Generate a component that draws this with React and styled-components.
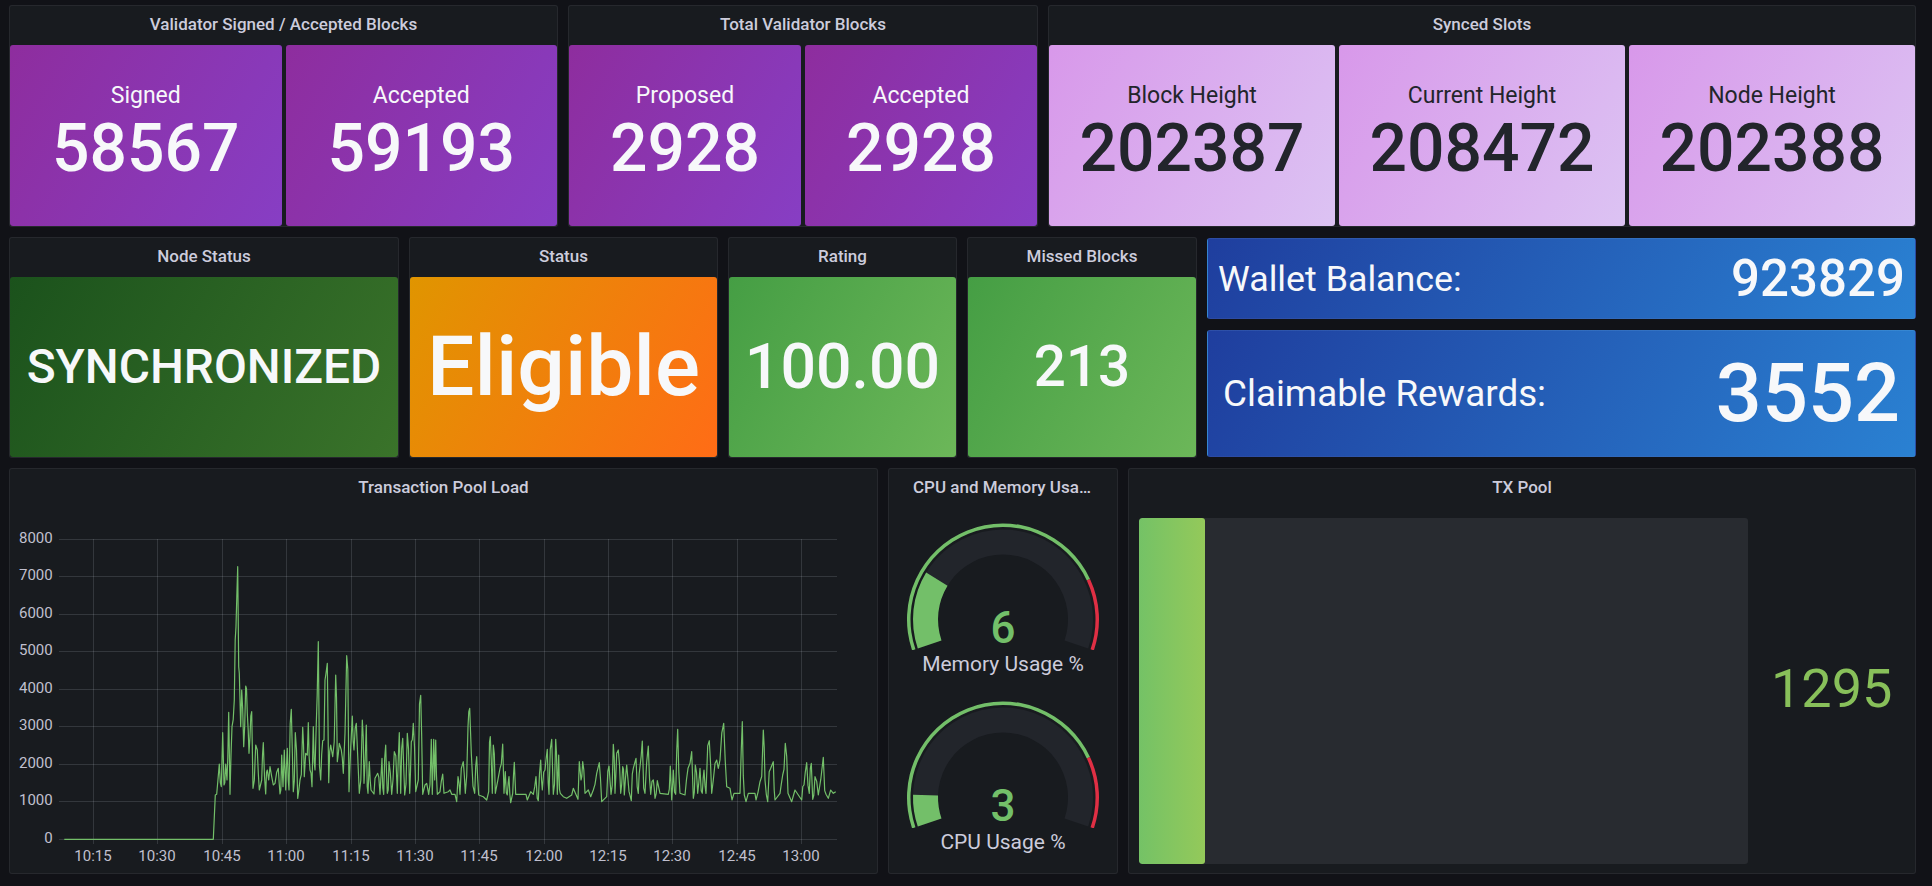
import React from "react";
import styled, { createGlobalStyle } from "styled-components";

const Global = createGlobalStyle`
  html, body { margin: 0; padding: 0; background: #111217; }
  body { font-family: Roboto, "Liberation Sans", sans-serif; color: #ccccdc; }
`;

const Page = styled.div`
  width: 1932px;
  height: 886px;
  box-sizing: border-box;
  padding: 5px 16px 0 9px;
  display: grid;
  grid-template-rows: 222px 221px 406px;
  row-gap: 10px;
  overflow: hidden;
`;

const Row = styled.div`
  display: grid;
  grid-template-columns: ${(p) => p.$cols};
  column-gap: 10px;
  min-width: 0;
  min-height: 0;
`;

const Panel = styled.section`
  background: #181b1f;
  border: 1px solid rgba(204, 204, 220, 0.08);
  border-radius: 3px;
  box-sizing: border-box;
  display: flex;
  flex-direction: column;
  min-width: 0;
  min-height: 0;
`;

const PanelTitle = styled.h2`
  flex: 0 0 39px;
  margin: 0;
  padding: 0 24px;
  font-size: 17px;
  font-weight: 500;
  line-height: 37px;
  text-align: center;
  color: #ccccdc;
  white-space: nowrap;
  overflow: hidden;
  text-overflow: ellipsis;
`;

const StatGroup = styled.div`
  flex: 1;
  display: flex;
  gap: 4px;
  min-height: 0;
`;

const tones = {
  purple: "linear-gradient(120deg, #8e2d9e, #873ec4)",
  pink: "linear-gradient(120deg, #d898ea, #dcc3f3)",
  forest: "linear-gradient(120deg, #1b521c, #3a732a)",
  orange: "linear-gradient(120deg, #e09500, #ff6c16)",
  green: "linear-gradient(120deg, #459e44, #6cb759)",
  blue: "linear-gradient(120deg, #1f3e9e, #2a81d2)",
};

const StatCard = styled.div`
  flex: 1;
  min-width: 0;
  border-radius: 3px;
  background: ${(p) => tones[p.$tone]};
  color: ${(p) => (p.$tone === "pink" ? "#22252b" : "#f7f8fa")};
  display: flex;
  flex-direction: column;
  align-items: center;
  justify-content: center;
`;

const StatLabel = styled.div`
  font-size: 23px;
  line-height: 32px;
  margin: -6px 0 1px;
`;

const StatValue = styled.div`
  font-size: ${(p) => p.$size}px;
  font-weight: 500;
  line-height: 1.1;
  white-space: nowrap;
`;

const BalanceStack = styled.div`
  display: grid;
  grid-template-rows: 81px 127px;
  row-gap: 11px;
  padding-top: 1px;
  min-width: 0;
`;

const BalanceCard = styled.div`
  border-radius: 3px;
  border: 1px solid rgba(204, 204, 220, 0.08);
  background: ${tones.blue};
  color: #f7f8fa;
  display: flex;
  align-items: center;
  justify-content: space-between;
  padding: 0 ${(p) => p.$pr}px 0 ${(p) => p.$pl}px;
`;

const BalanceLabel = styled.div`
  font-size: ${(p) => p.$size}px;
`;

const BalanceValue = styled.div`
  font-size: ${(p) => p.$size}px;
  font-weight: 500;
  line-height: 1;
`;

const ChartSvg = styled.svg`
  display: block;
  font-family: Roboto, sans-serif;
`;

const GaugeColumn = styled.div`
  display: grid;
  grid-template-rows: 178.3px 178.3px;
`;

const GaugeItem = styled.div`
  position: relative;
  display: flex;
  flex-direction: column;
  align-items: center;
`;

const GaugeValue = styled.div`
  position: absolute;
  left: 0;
  right: 0;
  top: 96px;
  font-size: 44px;
  font-weight: 500;
  line-height: 48px;
  text-align: center;
  color: #73bf69;
`;

const GaugeLabel = styled.div`
  font-size: 21px;
  line-height: 28px;
  color: #ccccdc;
`;

const BarBody = styled.div`
  flex: 1;
  display: flex;
  align-items: stretch;
  padding: 10px 10px 9px;
  min-height: 0;
`;

const BarTrack = styled.div`
  flex: 0 0 609px;
  background: #282b30;
  border-radius: 3px;
  overflow: hidden;
`;

const BarFill = styled.div`
  height: 100%;
  background: linear-gradient(90deg, #74c266, #94c95a);
  border-radius: 3px;
`;

const BarValue = styled.div`
  flex: 1;
  display: flex;
  align-items: center;
  padding: 0 0 5px 23px;
  font-size: 54px;
  color: #88c05a;
`;

const A = [[193,1138],[640,1138],[646,1005],[650,1003],[658,912],[664,980],[668,818],[672,975],[677,912],[681,960],[686,757],[690,1003],[696,800],[703,720],[708,500],[713,320],[716,620],[718,640],[722,800],[725,690],[731,860],[737,678],[742,760],[747,880],[750,830],[755,755],[759,985],[767,855],[772,870],[778,990],[785,960],[790,848],[797,1002],[802,930],[806,960],[810,920],[815,950],[820,975],[825,970],[835,925],[840,1002],[845,885],[849,980],[853,870],[857,990],[862,865],[867,990],[874,748],[880,995],[886,818],[893,1015],[900,960],[908,802],[913,950],[917,880],[922,885],[925,788],[930,930],[936,980],[940,800],[945,930],[948,820],[955,545],[962,960],[968,842],[972,840],[978,640],[982,610],[986,968],[992,855],[998,890],[1007,645],[1012,905],[1018,850],[1024,870],[1030,940],[1040,587],[1047,995],[1057,768],[1062,870],[1069,790],[1078,1000],[1087,780],[1092,970],[1099,795],[1104,1000],[1108,905],[1113,990],[1122,1002],[1125,955],[1133,940],[1140,1003],[1146,895],[1151,1003],[1157,855],[1162,1000],[1167,905],[1175,1003],[1183,875],[1192,1000],[1198,818],[1202,1000],[1208,835],[1214,1005],[1222,820],[1229,1000],[1234,845],[1240,790],[1247,995],[1255,960],[1262,706],[1268,1003],[1275,975],[1280,970],[1286,1003],[1294,838],[1297,1003],[1301,838],[1304,960],[1307,840],[1312,1003],[1320,995],[1328,942],[1332,1000],[1345,995],[1350,990],[1355,1003],[1365,1003],[1370,1025],[1374,950],[1380,1003],[1384,925],[1390,905],[1396,1000],[1404,800],[1409,745],[1414,880],[1424,1000],[1430,890],[1436,1005],[1450,1010],[1460,1020],[1466,995],[1471,830],[1477,1000],[1480,855],[1486,1000],[1500,925]];
const B = [[8,852],[12,1000],[16,935],[22,1005],[27,950],[32,1028],[38,1000],[43,907],[47,1003],[78,1003],[82,1020],[92,995],[100,1003],[108,950],[115,1022],[122,900],[127,990],[135,930],[142,868],[147,1003],[155,838],[160,1003],[167,838],[172,1003],[176,885],[181,1000],[190,1010],[200,1015],[215,1005],[220,985],[234,1018],[238,905],[243,960],[248,905],[255,1000],[265,990],[272,1010],[280,990],[290,940],[298,908],[305,1025],[320,1010],[327,918],[333,1003],[340,853],[345,1000],[350,880],[355,870],[362,1000],[368,920],[373,1005],[380,915],[394,1022],[400,925],[408,895],[415,1000],[420,920],[427,843],[435,1000],[445,858],[452,1003],[460,960],[465,1015],[472,962],[480,1000],[505,1003],[511,918],[515,1020],[520,930],[527,1003],[533,808],[540,1000],[555,1005],[564,925],[570,910],[575,875],[580,1015],[586,915],[593,1000],[600,925],[607,1000],[612,930],[618,1000],[628,842],[635,1000],[640,960],[650,900],[655,925],[660,900],[671,790],[680,980],[690,985],[696,1020],[702,1000],[720,1000],[727,785],[733,1005],[738,1025],[745,1000],[765,1000],[768,1020],[780,965],[790,810],[795,960],[803,1025],[812,925],[820,905],[825,1020],[840,1000],[848,945],[856,850],[864,1000],[875,1025],[885,990],[895,1005],[905,1020],[912,975],[920,908],[928,1000],[934,910],[938,1018],[945,950],[955,1005],[970,892],[978,1003],[985,1015],[992,990],[1000,1000],[1007,995]];

// The trace keeps the peaks; steep stretches get one extra sample for the fine jitter of the series.
const traced = [...A, ...B.map(([x, y]) => [x + 1500, y])];
const dense = [];
traced.forEach(([x, y], i) => {
  const prev = traced[i - 1];
  if (prev && x > 650 && x - prev[0] >= 5 && Math.abs(y - prev[1]) > 40) {
    const wobble = ((i * 37) % 11) / 10 - 0.5;
    const midY = (prev[1] + y) / 2 + wobble * Math.abs(y - prev[1]) * 0.8;
    dense.push([(prev[0] + x) / 2, Math.min(1025, midY)]);
  }
  dense.push([x, y]);
});
const linePoints = dense.map(([x, y]) => `${(x / 3).toFixed(1)},${(y / 3 + 460).toFixed(1)}`).join(" ");

const hLines = [
  ["8000", 539],
  ["7000", 576],
  ["6000", 614],
  ["5000", 651],
  ["4000", 689],
  ["3000", 726],
  ["2000", 764],
  ["1000", 801],
  ["0", 839],
];
const vLines = [
  ["10:15", 93],
  ["10:30", 157],
  ["10:45", 222],
  ["11:00", 286],
  ["11:15", 351],
  ["11:30", 415],
  ["11:45", 479],
  ["12:00", 544],
  ["12:15", 608],
  ["12:30", 672],
  ["12:45", 737],
  ["13:00", 801],
];

function TimeChart() {
  return (
    <ChartSvg width="867" height="365" viewBox="10 508 867 365">
      {hLines.map(([, y]) => (
        <line key={y} x1="59" x2="837" y1={y + 0.5} y2={y + 0.5} stroke="rgba(240,250,255,0.13)" />
      ))}
      {vLines.map(([, x]) => (
        <line key={x} x1={x + 0.5} x2={x + 0.5} y1="539" y2="844" stroke="rgba(240,250,255,0.13)" />
      ))}
      <polyline points={linePoints} fill="none" stroke="#73bf69" strokeWidth="1.2" strokeLinejoin="round" />
      {hLines.map(([t, y]) => (
        <text key={t} x="52.7" y={y + 4} textAnchor="end" fontSize="15" fill="#c0c0cf">{t}</text>
      ))}
      {vLines.map(([t, x]) => (
        <text key={t} x={x} y="861" textAnchor="middle" fontSize="15" fill="#c0c0cf">{t}</text>
      ))}
    </ChartSvg>
  );
}

const CX = 114;
const CY = 111.5;
const polar = (r, deg) => {
  const a = (deg * Math.PI) / 180;
  return [CX + r * Math.cos(a), CY - r * Math.sin(a)];
};
const fmt = (n) => n.toFixed(2);
const sector = (r0, r1, from, to) => {
  const [x0, y0] = polar(r1, from);
  const [x1, y1] = polar(r1, to);
  const [x2, y2] = polar(r0, to);
  const [x3, y3] = polar(r0, from);
  const large = Math.abs(from - to) > 180 ? 1 : 0;
  return `M${fmt(x0)} ${fmt(y0)}A${r1} ${r1} 0 ${large} 1 ${fmt(x1)} ${fmt(y1)}L${fmt(x2)} ${fmt(y2)}A${r0} ${r0} 0 ${large} 0 ${fmt(x3)} ${fmt(y3)}Z`;
};

function Gauge({ value, label, fillEnd }) {
  return (
    <GaugeItem>
      <svg width="228" height="142" viewBox="0 0 228 142">
        <path d={sector(65, 90, 198.8, -18.8)} fill="#22252b" />
        <path d={sector(65, 90, 198.8, fillEnd)} fill="#73bf69" />
        <path d={sector(92.5, 96, 198.8, 25)} fill="#73bf69" />
        <path d={sector(92.5, 96, 25, -18.8)} fill="#e02f44" />
      </svg>
      <GaugeValue>{value}</GaugeValue>
      <GaugeLabel>{label}</GaugeLabel>
    </GaugeItem>
  );
}

export default function App() {
  return (
    <>
      <Global />
      <Page>
        <Row $cols="549px 470px 868px">
          <Panel>
            <PanelTitle>Validator Signed / Accepted Blocks</PanelTitle>
            <StatGroup>
              <StatCard $tone="purple"><StatLabel>Signed</StatLabel><StatValue $size={66}>58567</StatValue></StatCard>
              <StatCard $tone="purple"><StatLabel>Accepted</StatLabel><StatValue $size={66}>59193</StatValue></StatCard>
            </StatGroup>
          </Panel>
          <Panel>
            <PanelTitle>Total Validator Blocks</PanelTitle>
            <StatGroup>
              <StatCard $tone="purple"><StatLabel>Proposed</StatLabel><StatValue $size={66}>2928</StatValue></StatCard>
              <StatCard $tone="purple"><StatLabel>Accepted</StatLabel><StatValue $size={66}>2928</StatValue></StatCard>
            </StatGroup>
          </Panel>
          <Panel>
            <PanelTitle>Synced Slots</PanelTitle>
            <StatGroup>
              <StatCard $tone="pink"><StatLabel>Block Height</StatLabel><StatValue $size={66}>202387</StatValue></StatCard>
              <StatCard $tone="pink"><StatLabel>Current Height</StatLabel><StatValue $size={66}>208472</StatValue></StatCard>
              <StatCard $tone="pink"><StatLabel>Node Height</StatLabel><StatValue $size={66}>202388</StatValue></StatCard>
            </StatGroup>
          </Panel>
        </Row>
        <Row $cols="390px 309px 229px 230px 709px">
          <Panel>
            <PanelTitle>Node Status</PanelTitle>
            <StatGroup><StatCard $tone="forest"><StatValue $size={47.8}>SYNCHRONIZED</StatValue></StatCard></StatGroup>
          </Panel>
          <Panel>
            <PanelTitle>Status</PanelTitle>
            <StatGroup><StatCard $tone="orange"><StatValue $size={84}>Eligible</StatValue></StatCard></StatGroup>
          </Panel>
          <Panel>
            <PanelTitle>Rating</PanelTitle>
            <StatGroup><StatCard $tone="green"><StatValue $size={62.6}>100.00</StatValue></StatCard></StatGroup>
          </Panel>
          <Panel>
            <PanelTitle>Missed Blocks</PanelTitle>
            <StatGroup><StatCard $tone="green"><StatValue $size={56.5}>213</StatValue></StatCard></StatGroup>
          </Panel>
          <BalanceStack>
            <BalanceCard $pl={10} $pr={10}>
              <BalanceLabel $size={35.8}>Wallet Balance:</BalanceLabel>
              <BalanceValue $size={51}>923829</BalanceValue>
            </BalanceCard>
            <BalanceCard $pl={15} $pr={15}>
              <BalanceLabel $size={36.8}>Claimable Rewards:</BalanceLabel>
              <BalanceValue $size={81}>3552</BalanceValue>
            </BalanceCard>
          </BalanceStack>
        </Row>
        <Row $cols="869px 230px 788px">
          <Panel>
            <PanelTitle>Transaction Pool Load</PanelTitle>
            <TimeChart />
          </Panel>
          <Panel>
            <PanelTitle>CPU and Memory Usage</PanelTitle>
            <GaugeColumn>
              <Gauge value="6" label="Memory Usage %" fillEnd={148.6} />
              <Gauge value="3" label="CPU Usage %" fillEnd={178.2} />
            </GaugeColumn>
          </Panel>
          <Panel>
            <PanelTitle>TX Pool</PanelTitle>
            <BarBody>
              <BarTrack><BarFill style={{ width: `${(66 / 609) * 100}%` }} /></BarTrack>
              <BarValue>1295</BarValue>
            </BarBody>
          </Panel>
        </Row>
      </Page>
    </>
  );
}
